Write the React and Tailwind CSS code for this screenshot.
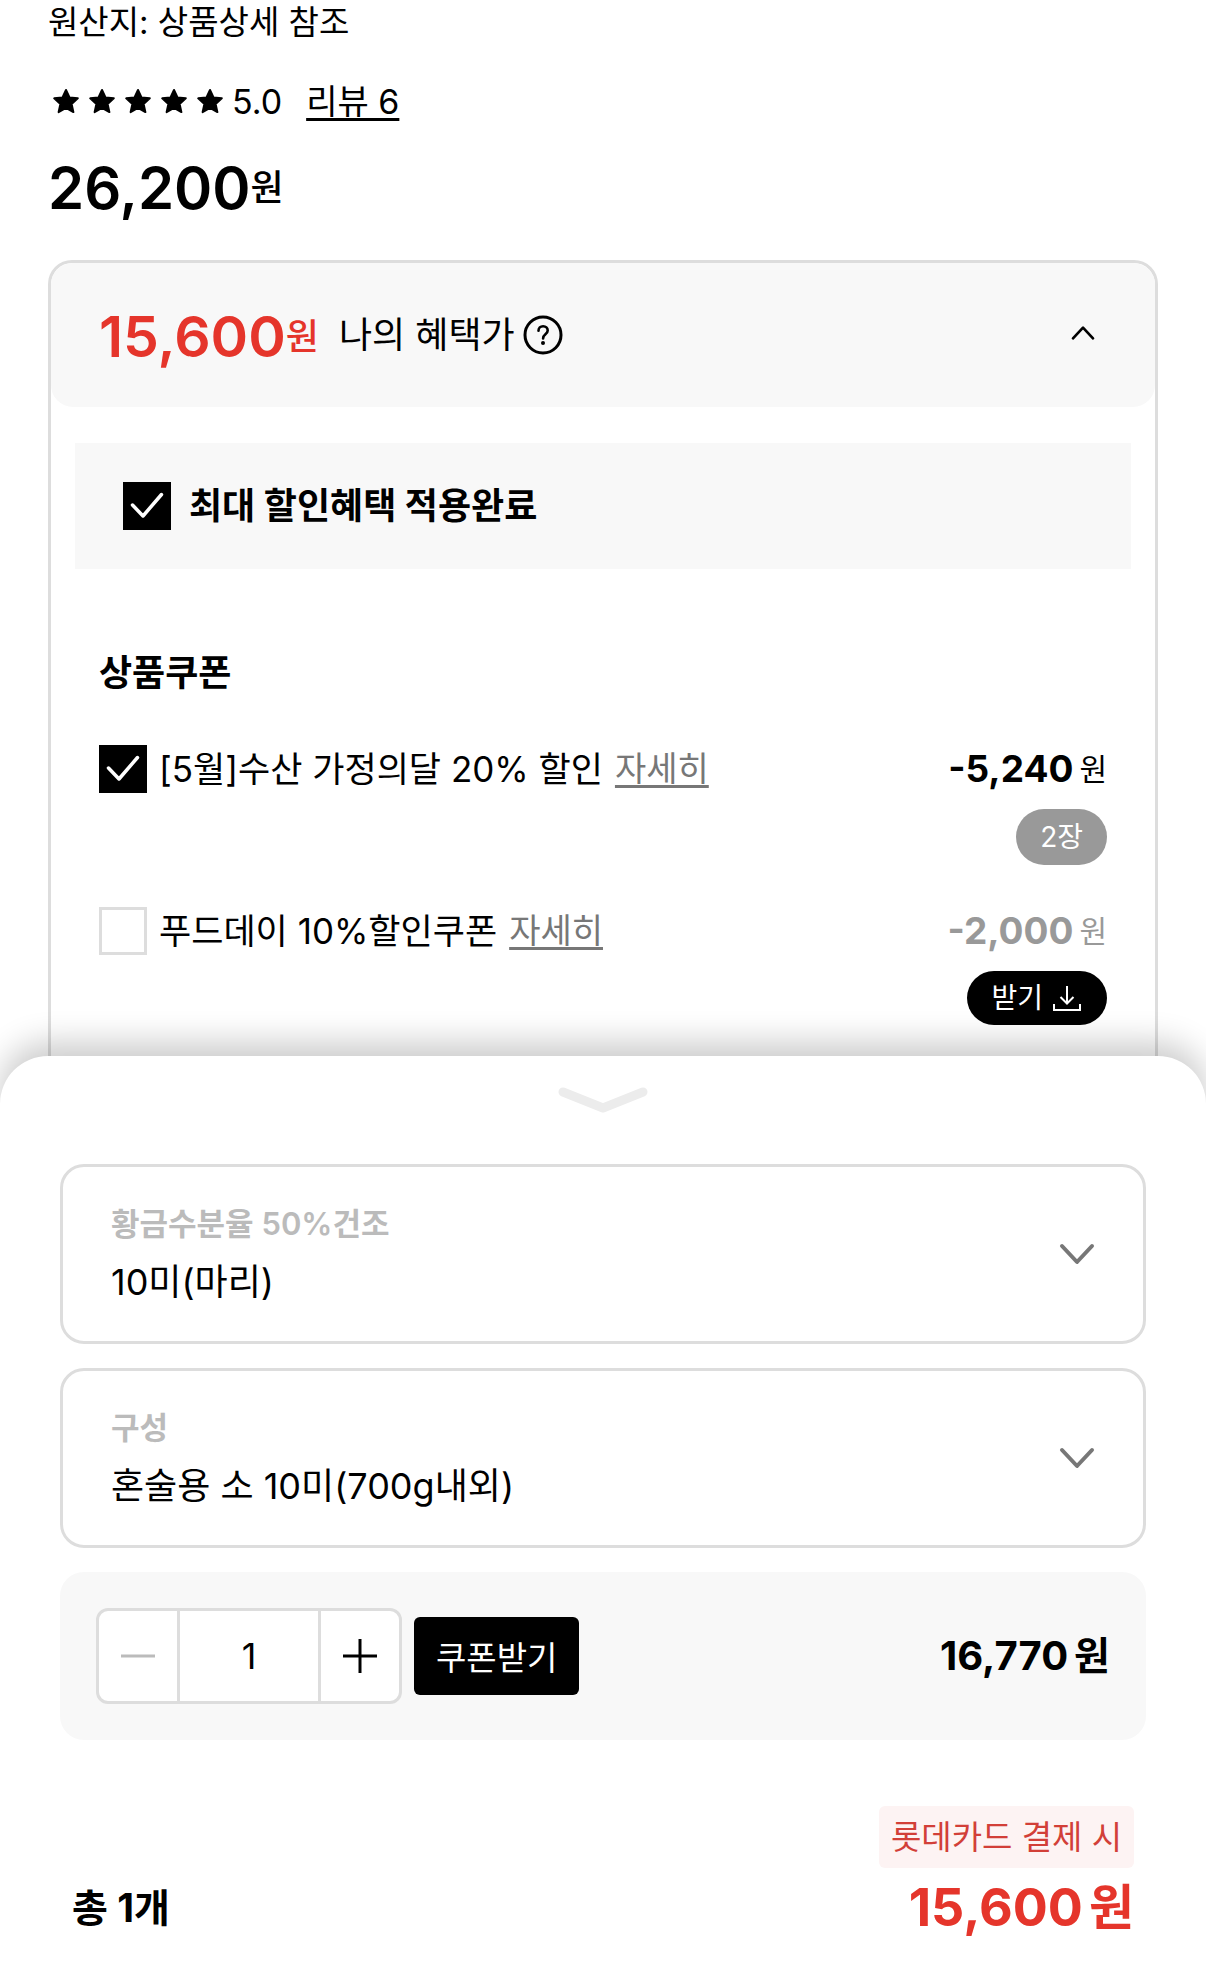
import { useState } from "react";

const COUPONS = [
  {
    id: "seafood",
    name: "[5월]수산 가정의달 20% 할인",
    amount: 5240,
    owned: 2,
  },
  {
    id: "foodday",
    name: "푸드데이 10%할인쿠폰",
    amount: 2000,
    owned: 0,
  },
];

const OPTIONS = [
  { id: "dry", label: "황금수분율 50%건조", value: "10미(마리)" },
  { id: "set", label: "구성", value: "혼술용 소 10미(700g내외)" },
];

const formatPrice = (value) => value.toLocaleString("ko-KR");

const Star = () => (
  <svg viewBox="0 0 28 28" className="size-7" aria-hidden="true">
    <path
      d="M14 2l3.500 7.400 8.300.9-6.200 5.600 1.800 8.200L14 20l-7.400 4.100 1.800-8.200-6.200-5.600 8.300-.9z"
      fill="black"
      stroke="black"
      strokeWidth="2"
      strokeLinejoin="round"
    />
  </svg>
);

const Chevron = ({ className }) => (
  <svg
    viewBox="0 0 36 24"
    fill="none"
    stroke="currentColor"
    strokeLinecap="round"
    strokeLinejoin="round"
    className={className}
    aria-hidden="true"
  >
    <path d="M3 4l15 16L33 4" strokeWidth="4" />
  </svg>
);

const CheckBox = ({ id, checked, onChange }) => (
  <span className="grid size-12 shrink-0">
    <input
      id={id}
      type="checkbox"
      checked={checked}
      onChange={onChange}
      className="col-start-1 row-start-1 size-12 appearance-none border-3 border-[#dddddd] bg-white checked:border-black checked:bg-black"
    />
    {checked && (
      <svg
        viewBox="0 0 48 48"
        fill="none"
        className="pointer-events-none col-start-1 row-start-1 size-12"
        aria-hidden="true"
      >
        <path
          d="M9.500 23L20 34 38.500 12.500"
          stroke="white"
          strokeWidth="3.500"
          strokeLinecap="round"
          strokeLinejoin="round"
        />
      </svg>
    )}
  </span>
);

const App = () => {
  const [maxApplied, setMaxApplied] = useState(true);
  const [selected, setSelected] = useState({ seafood: true, foodday: false });
  const [count, setCount] = useState(1);

  const toggle = (id) =>
    setSelected((prev) => ({ ...prev, [id]: !prev[id] }));

  return (
    <div className="flex min-h-screen flex-col overflow-x-hidden bg-white font-['Inter','Noto_Sans_CJK_KR',sans-serif] text-black">
      <main className="px-12">
        <p className="text-[33px] leading-11">원산지: 상품상세 참조</p>

        <div className="mt-9 flex items-center text-[34px] leading-11">
          <div className="ml-1 flex gap-2">
            {Array.from({ length: 5 }).map((_, index) => (
              <Star key={index} />
            ))}
          </div>
          <span className="ml-2">5.0</span>
          <a
            href="#reviews"
            className="ml-6 underline decoration-3 underline-offset-4"
          >
            리뷰 6
          </a>
        </div>

        <p className="mt-8 flex items-center leading-16 font-semibold">
          <span className="text-[58px]">26,200</span>
          <span className="text-[36px] font-medium">원</span>
        </p>

        <section className="mt-10 rounded-t-3xl border-3 border-b-0 border-[#dddddd] pb-[79px]">
          <header className="flex h-36 items-center rounded-[22px] bg-[#f8f8f8] px-12">
            <p className="flex items-center pt-1 leading-16 font-semibold text-[#e5352b]">
              <span className="text-[57px]">15,600</span>
              <span className="text-[36px] font-medium">원</span>
            </p>
            <span className="ml-5 text-[36px] leading-12">나의 혜택가</span>
            <button type="button" aria-label="혜택가 안내" className="ml-2">
              <svg viewBox="0 0 40 40" fill="none" className="size-10">
                <circle cx="20" cy="20" r="18" stroke="black" strokeWidth="3" />
                <path
                  d="M15.500 15.800c0-2.700 1.900-4.600 4.600-4.600s4.600 1.800 4.600 4.300c0 3.900-4.600 3.800-4.600 7.900"
                  stroke="black"
                  strokeWidth="2.600"
                  strokeLinecap="round"
                />
                <circle cx="20" cy="28" r="2" fill="black" />
              </svg>
            </button>
            <button type="button" aria-label="접기" className="ml-auto px-3 pb-1">
              <Chevron className="w-6 rotate-180" />
            </button>
          </header>

          <div className="mx-6 mt-9 flex h-[126px] items-center gap-[18px] bg-[#f8f8f8] px-12">
            <CheckBox
              id="max-benefit"
              checked={maxApplied}
              onChange={() => setMaxApplied(!maxApplied)}
            />
            <label
              htmlFor="max-benefit"
              className="text-[36px] leading-12 font-bold"
            >
              최대 할인혜택 적용완료
            </label>
          </div>

          <div className="px-12">
            <h2 className="mt-20 text-[36px] leading-12 font-bold">
              상품쿠폰
            </h2>
            <ul className="mt-12 flex flex-col gap-[42px]">
              {COUPONS.map((coupon) => (
                <li
                  key={coupon.id}
                  className="flex items-start justify-between"
                >
                  <div className="flex items-center gap-3">
                    <CheckBox
                      id={coupon.id}
                      checked={selected[coupon.id]}
                      onChange={() => toggle(coupon.id)}
                    />
                    <label
                      htmlFor={coupon.id}
                      className="text-[35px] leading-12"
                    >
                      {coupon.name}
                    </label>
                    <a
                      href={`#${coupon.id}`}
                      className="text-[34px] leading-12 text-[#777777] underline decoration-3 underline-offset-4"
                    >
                      자세히
                    </a>
                  </div>
                  <div className="flex flex-col items-end gap-4">
                    <p
                      className={`flex items-center gap-1.5 leading-12 ${
                        selected[coupon.id] ? "text-black" : "text-[#999999]"
                      }`}
                    >
                      <span className="text-[37px] font-bold">
                        -{formatPrice(coupon.amount)}
                      </span>
                      <span className="text-[30px]">원</span>
                    </p>
                    {coupon.owned ? (
                      <span className="flex h-14 items-center rounded-full bg-[#999999] px-6 text-[28px] leading-10 text-white">
                        {coupon.owned}장
                      </span>
                    ) : (
                      <button
                        type="button"
                        className="flex h-[54px] items-center gap-2 rounded-full bg-black px-6 text-[28px] leading-10 text-white"
                      >
                        받기
                        <svg
                          viewBox="0 0 32 32"
                          fill="none"
                          stroke="white"
                          strokeWidth="2"
                          className="size-8"
                          aria-hidden="true"
                        >
                          <path d="M16 4v17M9.500 15l6.500 6.500 6.500-6.500M3 22v6h26v-6" />
                        </svg>
                      </button>
                    )}
                  </div>
                </li>
              ))}
            </ul>
          </div>
        </section>
      </main>

      <section className="relative -mt-12 grow rounded-t-[48px] bg-white px-15 pb-6 shadow-[0_-14px_32px_rgba(0,0,0,0.2)]">
        <button
          type="button"
          aria-label="옵션 닫기"
          className="mx-auto mt-7 block"
        >
          <svg viewBox="0 0 96 32" fill="none" className="h-8 w-24">
            <path
              d="M8 8l40 16L88 8"
              stroke="#ececec"
              strokeWidth="9"
              strokeLinecap="round"
              strokeLinejoin="round"
            />
          </svg>
        </button>

        <div className="mt-12 flex flex-col gap-6">
          {OPTIONS.map((option) => (
            <div
              key={option.id}
              className="flex h-45 items-center rounded-3xl border-3 border-[#dddddd] px-12"
            >
              <div className="flex grow flex-col gap-3">
                <label
                  htmlFor={option.id}
                  className="text-[31px] leading-11 font-semibold text-[#bbbbbb]"
                >
                  {option.label}
                </label>
                <select
                  id={option.id}
                  className="appearance-none bg-transparent text-[36px] leading-12"
                >
                  <option>{option.value}</option>
                </select>
              </div>
              <Chevron className="w-9 text-[#777777]" />
            </div>
          ))}

          <div className="flex h-42 items-center justify-between rounded-3xl bg-[#f8f8f8] px-9">
            <div className="flex items-center gap-3">
              <div className="flex h-24 overflow-hidden rounded-xl border-3 border-[#dddddd] bg-white">
                <button
                  type="button"
                  aria-label="수량 감소"
                  onClick={() => setCount(Math.max(1, count - 1))}
                  className="flex w-[78px] items-center justify-center"
                >
                  <svg viewBox="0 0 36 36" className="size-9">
                    <path d="M1 18h34" stroke="#bbbbbb" strokeWidth="3" />
                  </svg>
                </button>
                <input
                  type="text"
                  aria-label="수량"
                  value={count}
                  onChange={(event) =>
                    setCount(Number(event.target.value) || 1)
                  }
                  className="w-36 border-x-3 border-[#dddddd] text-center text-[36px] outline-none"
                />
                <button
                  type="button"
                  aria-label="수량 증가"
                  onClick={() => setCount(count + 1)}
                  className="flex w-[78px] items-center justify-center"
                >
                  <svg viewBox="0 0 36 36" className="size-9">
                    <path
                      d="M1 18h34M18 1v34"
                      stroke="black"
                      strokeWidth="3"
                    />
                  </svg>
                </button>
              </div>
              <button
                type="button"
                className="h-[78px] rounded-md bg-black px-[22px] pt-1 text-[33px] leading-12 text-white"
              >
                쿠폰받기
              </button>
            </div>
            <p className="flex items-center gap-1.5 leading-12 font-bold">
              <span className="text-[40px]">{formatPrice(16770 * count)}</span>
              <span className="text-[39px]">원</span>
            </p>
          </div>
        </div>

        <div className="mt-[66px] flex items-end justify-between px-3">
          <p className="text-[39px] leading-16 font-bold">총 {count}개</p>
          <div className="flex flex-col items-end gap-2">
            <span className="rounded-md bg-[#fdf3f3] px-3 py-[9px] text-[33px] leading-11 text-[#d23f38]">
              롯데카드 결제 시
            </span>
            <p className="flex items-center gap-1.5 leading-16 font-bold text-[#e5352b]">
              <span className="text-[52px]">{formatPrice(15600 * count)}</span>
              <span className="text-[49px]">원</span>
            </p>
          </div>
        </div>
      </section>
    </div>
  );
};

export default App;
